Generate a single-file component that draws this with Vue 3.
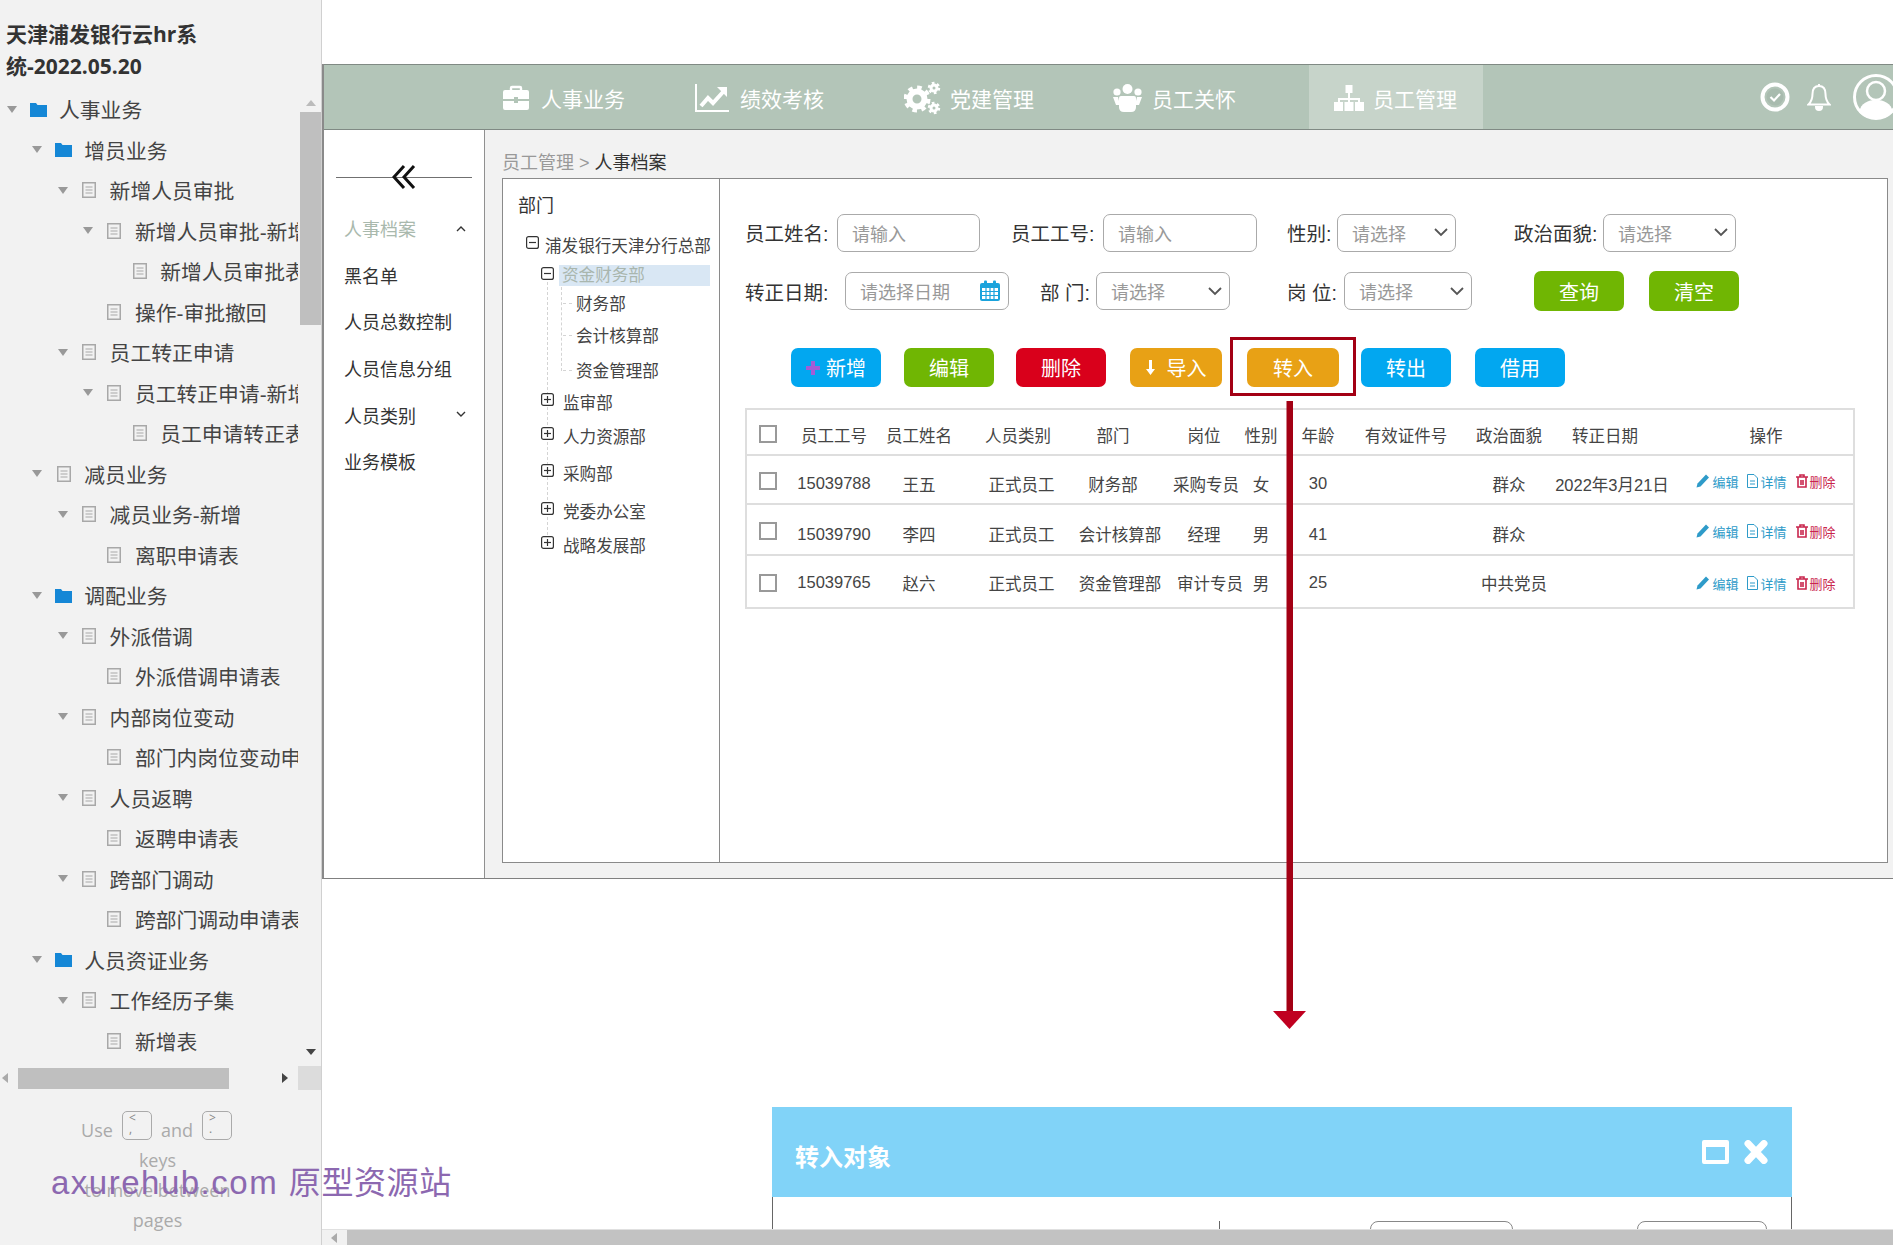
<script setup>
const treeRows = [
  { t: "人事业务", lv: 0, kind: "folder", open: true },
  { t: "增员业务", lv: 1, kind: "folder", open: true },
  { t: "新增人员审批", lv: 2, kind: "doc", open: true },
  { t: "新增人员审批-新增", lv: 3, kind: "doc", open: true },
  { t: "新增人员审批表", lv: 4, kind: "doc" },
  { t: "操作-审批撤回", lv: 3, kind: "doc" },
  { t: "员工转正申请", lv: 2, kind: "doc", open: true },
  { t: "员工转正申请-新增", lv: 3, kind: "doc", open: true },
  { t: "员工申请转正表", lv: 4, kind: "doc" },
  { t: "减员业务", lv: 1, kind: "doc", open: true },
  { t: "减员业务-新增", lv: 2, kind: "doc", open: true },
  { t: "离职申请表", lv: 3, kind: "doc" },
  { t: "调配业务", lv: 1, kind: "folder", open: true },
  { t: "外派借调", lv: 2, kind: "doc", open: true },
  { t: "外派借调申请表", lv: 3, kind: "doc" },
  { t: "内部岗位变动", lv: 2, kind: "doc", open: true },
  { t: "部门内岗位变动申请表", lv: 3, kind: "doc" },
  { t: "人员返聘", lv: 2, kind: "doc", open: true },
  { t: "返聘申请表", lv: 3, kind: "doc" },
  { t: "跨部门调动", lv: 2, kind: "doc", open: true },
  { t: "跨部门调动申请表", lv: 3, kind: "doc" },
  { t: "人员资证业务", lv: 1, kind: "folder", open: true },
  { t: "工作经历子集", lv: 2, kind: "doc", open: true },
  { t: "新增表", lv: 3, kind: "doc" },
];

const menu = [
  { t: "人事档案", on: true, arrow: "up" },
  { t: "黑名单" },
  { t: "人员总数控制" },
  { t: "人员信息分组" },
  { t: "人员类别", arrow: "down" },
  { t: "业务模板" },
];

// 部门树，行高不均匀，按数据给
const depts = [
  { t: "浦发银行天津分行总部", lv: 0, h: 30, box: "minus" },
  { t: "资金财务部", lv: 1, h: 31, box: "minus", sel: true },
  { t: "财务部", lv: 2, h: 23 },
  { t: "会计核算部", lv: 2, h: 42 },
  { t: "资金管理部", lv: 2, h: 28 },
  { t: "监审部", lv: 1, h: 36, box: "plus" },
  { t: "人力资源部", lv: 1, h: 32, box: "plus" },
  { t: "采购部", lv: 1, h: 42, box: "plus" },
  { t: "党委办公室", lv: 1, h: 34, box: "plus" },
  { t: "战略发展部", lv: 1, h: 34, box: "plus" },
];

const row1 = [
  { label: "员工姓名:", lw: 92, ml: 0, w: 143, ph: "请输入" },
  { label: "员工工号:", lw: 92, ml: 31, w: 154, ph: "请输入" },
  { label: "性别:", lw: 50, ml: 30, w: 119, ph: "请选择", select: true },
  { label: "政治面貌:", lw: 89, ml: 58, w: 133, ph: "请选择", select: true },
];
const row2 = [
  { label: "转正日期:", lw: 100, ml: 0, w: 164, ph: "请选择日期", date: true },
  { label: "部 门:", lw: 56, ml: 31, w: 134, ph: "请选择", select: true },
  { label: "岗 位:", lw: 57, ml: 57, w: 128, ph: "请选择", select: true },
];

const headers = ["员工工号", "员工姓名", "人员类别", "部门", "岗位", "性别", "年龄", "有效证件号", "政治面貌", "转正日期", "操作"];
// pt: 文字下移量, deptPad: 部门列修正
const people = [
  { h: 49, pt: 8, deptPad: 0, posPad: 4, polPad: 0, c: ["15039788", "王五", "正式员工", "财务部", "采购专员", "女", "30", "", "群众", "2022年3月21日"] },
  { h: 51, pt: 9, deptPad: 14, posPad: 0, polPad: 0, c: ["15039790", "李四", "正式员工", "会计核算部", "经理", "男", "41", "", "群众", ""] },
  { h: 53, pt: 2, deptPad: 14, posPad: 12, polPad: 10, c: ["15039765", "赵六", "正式员工", "资金管理部", "审计专员", "男", "25", "", "中共党员", ""] },
];
function cellStyle(p, i) {
  if (i === 3) return { paddingLeft: `${p.deptPad}px` };
  if (i === 4) return { paddingLeft: `${18 + p.posPad}px` };
  if (i === 8) return { paddingLeft: `${p.polPad}px` };
  return null;
}
</script>

<template>
  <div class="page">
    <aside class="side">
      <div class="side-title">天津浦发银行云hr系<br />统-2022.05.20</div>
      <div class="tree-wrap">
        <div class="tree">
          <div
            v-for="(r, i) in treeRows"
            :key="i"
            class="tree-row"
            :style="{ paddingLeft: `${6 + r.lv * 25.3}px` }"
          >
            <span class="tri-slot"><i v-if="r.open" class="tri"></i></span>
            <span class="ico-slot">
              <svg v-if="r.kind === 'folder'" width="17" height="15" viewBox="0 0 17 15">
                <path d="M0 1h6l1.5 2H17v12H0z" fill="#1587d6" />
              </svg>
              <svg v-else width="14" height="16" viewBox="0 0 14 16" fill="none" stroke="#a8a8a8">
                <rect x="0.75" y="0.75" width="12.5" height="14.5" stroke-width="1.5" />
                <path d="M3.5 5h7M3.5 8h7M3.5 11h7" stroke-width="1.2" />
              </svg>
            </span>
            <span class="tree-text">{{ r.t }}</span>
          </div>
        </div>
        <div class="vbar">
          <i class="arrow-up"></i>
          <div class="vthumb"></div>
          <i class="arrow-down"></i>
        </div>
      </div>
      <div class="hbar">
        <i class="arrow-left"></i>
        <div class="hthumb"></div>
        <i class="arrow-right"></i>
        <div class="hcorner"></div>
      </div>
      <div class="help">
        <div class="help-line keys-line">
          Use <span class="key">&lt;<br />,</span> and <span class="key">&gt;<br />.</span>
        </div>
        <div class="help-line">keys</div>
        <div class="help-line">to move between</div>
        <div class="help-line">pages</div>
      </div>
    </aside>

    <main class="main">
      <section class="frame">
        <header class="topbar">
          <nav class="nav">
            <a class="nav-item">
              <svg width="28" height="26" viewBox="0 0 28 26" fill="#fff">
                <path d="M9 6V3a1 1 0 0 1 1-1h8a1 1 0 0 1 1 1v3" fill="none" stroke="#fff" stroke-width="2.4" />
                <path d="M3 5h22a2 2 0 0 1 2 2v7H16v-2h-4v2H1V7a2 2 0 0 1 2-2zM1 16h11v2h4v-2h11v7a2 2 0 0 1-2 2H3a2 2 0 0 1-2-2z" />
              </svg>
              <span>人事业务</span>
            </a>
            <a class="nav-item">
              <svg width="34" height="28" viewBox="0 0 34 28" fill="none" stroke="#fff">
                <path d="M1 0v27h33" stroke-width="2" />
                <path d="M6 22l7-8 5 5 10-11" stroke-width="4" />
                <path d="M22 3h10v10z" fill="#fff" stroke="none" />
              </svg>
              <span>绩效考核</span>
            </a>
            <a class="nav-item">
              <svg width="37" height="34" viewBox="0 0 37 34" fill="none" stroke="#fff">
                <circle cx="13" cy="18" r="7.5" stroke-width="6" />
                <circle cx="13" cy="18" r="11.5" stroke-width="4" stroke-dasharray="4.5 4.5" />
                <circle cx="30" cy="7" r="3" stroke-width="3" />
                <circle cx="30" cy="7" r="5" stroke-width="2.5" stroke-dasharray="2.6 2.6" />
                <circle cx="30" cy="27" r="3" stroke-width="3" />
                <circle cx="30" cy="27" r="5" stroke-width="2.5" stroke-dasharray="2.6 2.6" />
              </svg>
              <span>党建管理</span>
            </a>
            <a class="nav-item">
              <svg width="29" height="28" viewBox="0 0 29 28" fill="#fff">
                <circle cx="14.5" cy="5" r="5" />
                <circle cx="4" cy="8" r="3.6" />
                <circle cx="25" cy="8" r="3.6" />
                <path d="M0 13h5l2 8H3zM29 13h-5l-2 8h4z" />
                <path d="M8 12h13a2 2 0 0 1 2 2v9q0 5-5 5h-7q-5 0-5-5v-9a2 2 0 0 1 2-2z" />
              </svg>
              <span>员工关怀</span>
            </a>
            <a class="nav-item active">
              <svg width="30" height="26" viewBox="0 0 30 26" fill="#fff">
                <path d="M11.500 0h7v8h-7z" />
                <path d="M14 8h2v5h10v4h-2v-2H16v2h-2v-2H6v2H4v-4h10z" />
                <path d="M0 17h9v9H0zM10.500 17h9v9h-9zM21 17h9v9h-9z" />
              </svg>
              <span>员工管理</span>
            </a>
          </nav>
          <div class="top-icons">
            <svg width="30" height="30" viewBox="0 0 30 30" fill="none" stroke="#fff">
              <circle cx="15" cy="15" r="12.500" stroke-width="4" />
              <circle cx="15" cy="15" r="8.500" fill="#a8bbae" stroke="none" />
              <path d="M10.500 15l3.500 3.500 6-6.500" stroke-width="2.200" />
            </svg>
            <svg width="24" height="28" viewBox="0 0 24 28" fill="none" stroke="#fff" stroke-width="2">
              <path d="M12 3c-4.500 0-6.500 3.500-6.500 8 0 5-1.500 8-4 10.500h21c-2.500-2.500-4-5.500-4-10.500 0-4.500-2-8-6.500-8z" />
              <path d="M12 1v2" />
              <path d="M9 24a3 3 0 0 0 6 0z" fill="#fff" />
            </svg>
            <svg class="avatar" width="46" height="46" viewBox="0 0 46 46" fill="#fff">
              <circle cx="23" cy="23" r="21.500" fill="none" stroke="#fff" stroke-width="3" />
              <circle cx="23" cy="17" r="9" fill="none" stroke="#fff" stroke-width="2.500" />
              <path d="M6 38c2-9 9-12 17-12s15 3 17 12c-4 4.500-10 7-17 7S10 42.500 6 38z" />
            </svg>
          </div>
        </header>

        <div class="frame-body">
          <div class="subnav">
            <div class="collapse">
              <svg width="24" height="26" viewBox="0 0 24 26" fill="none" stroke="#111" stroke-width="3">
                <path d="M12 2L2 13l10 11M22 2L12 13l10 11" />
              </svg>
            </div>
            <div v-for="m in menu" :key="m.t" class="menu-row" :class="{ on: m.on }">
              <span>{{ m.t }}</span>
              <svg v-if="m.arrow" width="10" height="7" viewBox="0 0 10 7" fill="none" stroke="#333" stroke-width="1.400">
                <path :d="m.arrow === 'up' ? 'M1 6l4-4 4 4' : 'M1 1l4 4 4-4'" />
              </svg>
            </div>
          </div>

          <div class="content">
            <div class="crumbs"><span class="crumb-muted">员工管理 &gt; </span>人事档案</div>
            <div class="panel">
              <div class="dept">
                <div class="dept-title">部门</div>
                <div class="dept-tree">
                  <i class="dash dash-a"></i>
                  <i class="dash dash-b"></i>
                  <div
                    v-for="d in depts"
                    :key="d.t"
                    class="dept-row"
                    :class="`lv${d.lv}`"
                    :style="{ height: `${d.h}px` }"
                  >
                    <svg v-if="d.box" class="dept-box" width="13" height="13" viewBox="0 0 13 13" fill="none" stroke="#333" stroke-width="1.200">
                      <rect x="0.600" y="0.600" width="11.800" height="11.800" rx="2" />
                      <path d="M3 6.500h7" />
                      <path v-if="d.box === 'plus'" d="M6.500 3v7" />
                    </svg>
                    <span :class="{ sel: d.sel }">{{ d.t }}</span>
                  </div>
                </div>
              </div>

              <div class="work">
                <div class="form-row">
                  <div v-for="f in row1" :key="f.label" class="field" :style="{ marginLeft: `${f.ml}px` }">
                    <label :style="{ width: `${f.lw}px` }">{{ f.label }}</label>
                    <div class="control" :style="{ width: `${f.w}px` }">
                      <span>{{ f.ph }}</span>
                      <svg v-if="f.select" width="14" height="9" viewBox="0 0 14 9" fill="none" stroke="#555" stroke-width="1.800">
                        <path d="M1 1l6 6 6-6" />
                      </svg>
                    </div>
                  </div>
                </div>
                <div class="form-row second">
                  <div v-for="f in row2" :key="f.label" class="field" :style="{ marginLeft: `${f.ml}px` }">
                    <label :style="{ width: `${f.lw}px` }">{{ f.label }}</label>
                    <div class="control" :style="{ width: `${f.w}px` }">
                      <span>{{ f.ph }}</span>
                      <svg v-if="f.select" width="14" height="9" viewBox="0 0 14 9" fill="none" stroke="#555" stroke-width="1.800">
                        <path d="M1 1l6 6 6-6" />
                      </svg>
                      <svg v-if="f.date" width="22" height="22" viewBox="0 0 22 22">
                        <rect x="1" y="3" width="20" height="18" rx="2" fill="#1aa3dc" />
                        <rect x="5" y="0.500" width="3" height="5" rx="1" fill="#1aa3dc" />
                        <rect x="14" y="0.500" width="3" height="5" rx="1" fill="#1aa3dc" />
                        <path d="M3 8h16v11H3z" fill="#fff" />
                        <path d="M3 11.500h16M3 15.500h16M7 8v11M11 8v11M15 8v11" stroke="#1aa3dc" stroke-width="1.200" />
                      </svg>
                    </div>
                  </div>
                  <button class="btn green search">查询</button>
                  <button class="btn green clear">清空</button>
                </div>

                <div class="actions">
                  <button class="btn blue">
                    <svg width="14" height="14" viewBox="0 0 14 14"><path d="M5 0h4v5h5v4H9v5H5V9H0V5h5z" fill="#a45cd6" /></svg>
                    新增
                  </button>
                  <button class="btn green">编辑</button>
                  <button class="btn red">删除</button>
                  <button class="btn orange wide import">
                    <svg width="9" height="15" viewBox="0 0 9 15"><path d="M3 0h3v9h3l-4.500 6L0 9h3z" fill="#fff" /></svg>
                    导入
                  </button>
                  <button class="btn orange wide marked">转入</button>
                  <button class="btn blue">转出</button>
                  <button class="btn blue">借用</button>
                </div>

                <div class="table">
                  <div class="tr head">
                    <div class="td"><i class="check"></i></div>
                    <div v-for="h in headers" :key="h" class="td">{{ h }}</div>
                  </div>
                  <div v-for="p in people" :key="p.c[0]" class="tr body" :style="{ height: `${p.h}px`, '--pt': `${p.pt}px` }">
                    <div class="td"><i class="check"></i></div>
                    <div v-for="(c, i) in p.c" :key="i" class="td" :style="cellStyle(p, i)">{{ c }}</div>
                    <div class="td ops">
                      <a class="op blue-op">
                        <svg width="14" height="14" viewBox="0 0 13 14"><path d="M9.500 0.500l3 3L4 12.500 0 13.500l1-4z" fill="#2e9bc9" /></svg>编辑
                      </a>
                      <a class="op blue-op">
                        <svg width="11" height="14" viewBox="0 0 11 14" fill="none" stroke="#2e9bc9"><path d="M0.500 0.500h6.500l3.500 3.500v9.500h-10zM3 7h5M3 10h5" /></svg>详情
                      </a>
                      <a class="op red-op">
                        <svg width="12" height="14" viewBox="0 0 12 14" fill="none" stroke="#c9264d" stroke-width="1.600"><path d="M0 3h12M4 3V1h4v2M2 3v10h8V3M5 6v5M7 6v5" /></svg>删除
                      </a>
                    </div>
                  </div>
                </div>
              </div>
            </div>
          </div>
        </div>
      </section>

      <section class="below">
        <div class="dialog">
          <div class="dialog-head">
            <span>转入对象</span>
            <div class="dialog-icons">
              <svg width="27" height="24" viewBox="0 0 27 24"><path d="M2 0h23a2 2 0 0 1 2 2v20a2 2 0 0 1-2 2H2a2 2 0 0 1-2-2V2a2 2 0 0 1 2-2zm2 7v13h19V7z" fill="#fff" /></svg>
              <svg width="24" height="24" viewBox="0 0 24 24"><path d="M4 3.500L20 20.500M20 3.500L4 20.500" stroke="#fff" stroke-width="7" stroke-linecap="round" fill="none" /></svg>
            </div>
          </div>
          <div class="dialog-body">
            <i class="tick"></i>
            <i class="stub stub-a"></i>
            <i class="stub stub-b"></i>
          </div>
        </div>
      </section>

      <div class="bottombar">
        <i class="arrow-left"></i>
        <div class="bottom-thumb"></div>
      </div>
    </main>

    <!-- 标注箭头，压在表格上面 -->
    <svg class="flow-arrow" width="40" height="630" viewBox="0 0 40 630">
      <rect x="16.500" y="0" width="6.500" height="612" fill="#a30014" />
      <path d="M3 610h33l-16.500 18z" fill="#c00020" />
    </svg>
    <div class="watermark">axurehub.com <span class="wm-cjk">原型资源站</span></div>
  </div>
</template>

<style scoped>
.page {
  position: relative;
  display: flex;
  width: 1893px;
  height: 1245px;
  overflow: hidden;
  background: #fff;
  font-family: "Liberation Sans", "Noto Sans CJK SC", sans-serif;
  color: #444;
}

/* 左侧页面树 */
.side {
  width: 321px;
  flex: none;
  display: flex;
  flex-direction: column;
  background: #f2f2f2;
  border-right: 1px solid #d0d0d0;
}
.side-title {
  height: 71px;
  padding: 18px 0 0 6px;
  font-family: "Open Sans", "Noto Sans CJK SC", sans-serif;
  font-size: 21px;
  font-weight: 700;
  line-height: 32px;
  color: #333;
}
.tree-wrap {
  display: flex;
  height: 977px;
}
.tree {
  width: 298px;
  margin-right: 2px;
  overflow: hidden;
}
.tree-row {
  display: flex;
  align-items: center;
  height: 40.500px;
  font-size: 20.800px;
  white-space: nowrap;
}
.tri-slot {
  width: 12px;
  flex: none;
  display: flex;
  justify-content: center;
}
.tri {
  border-left: 5.500px solid transparent;
  border-right: 5.500px solid transparent;
  border-top: 7px solid #999;
}
.ico-slot {
  width: 17px;
  margin-left: 12px;
  flex: none;
  display: flex;
  justify-content: center;
}
.tree-text {
  margin-left: 12px;
}
.vbar {
  width: 21px;
  display: flex;
  flex-direction: column;
  align-items: center;
  padding-top: 11px;
}
.arrow-up {
  border-left: 5px solid transparent;
  border-right: 5px solid transparent;
  border-bottom: 6px solid #bbb;
}
.arrow-down {
  margin-top: 724px;
  border-left: 5px solid transparent;
  border-right: 5px solid transparent;
  border-top: 6px solid #444;
}
.vthumb {
  width: 100%;
  height: 213px;
  margin-top: 6px;
  background: #bfbfbf;
}
.hbar {
  display: flex;
  align-items: center;
  height: 24px;
}
.arrow-left {
  flex: none;
  margin-left: 2px;
  border-top: 5.500px solid transparent;
  border-bottom: 5.500px solid transparent;
  border-right: 6px solid #aaa;
}
.arrow-right {
  flex: none;
  margin-left: 53px;
  border-top: 5.500px solid transparent;
  border-bottom: 5.500px solid transparent;
  border-left: 6px solid #444;
}
.hthumb {
  width: 211px;
  height: 21px;
  margin-left: 10px;
  background: #bfbfbf;
}
.hcorner {
  flex: 1;
  height: 24px;
  margin-left: 10px;
  background: #dcdcdc;
}
.help {
  padding: 25px 6px 0 0;
  text-align: center;
  font-family: "Open Sans", "Liberation Sans", sans-serif;
  font-size: 18px;
  color: #aaa;
}
.help-line {
  height: 30px;
  line-height: 30px;
}
.keys-line {
  display: flex;
  justify-content: center;
  align-items: center;
  gap: 9px;
  padding-right: 2px;
}
.key {
  width: 30px;
  height: 29px;
  box-sizing: border-box;
  margin-top: -10px;
  padding-left: 6px;
  border: 1.500px solid #aaa;
  border-radius: 5px;
  font-size: 12px;
  line-height: 11px;
  text-align: left;
  color: #888;
}

/* 右侧 */
.main {
  flex: 1;
  min-width: 0;
  display: flex;
  flex-direction: column;
  padding-top: 64px;
}
.frame {
  height: 815px;
  flex: none;
  box-sizing: border-box;
  display: flex;
  flex-direction: column;
  border-left: 2px solid #8a8a8a;
  border-bottom: 1px solid #808080;
}
.topbar {
  height: 66px;
  flex: none;
  box-sizing: border-box;
  display: flex;
  align-items: center;
  justify-content: space-between;
  background: #b3c5b8;
  border-top: 1px solid #808a84;
  border-bottom: 1px solid #808a84;
}
.nav {
  display: flex;
  align-self: stretch;
}
.nav-item {
  display: flex;
  align-items: center;
  gap: 11px;
  padding-top: 2px;
  font-size: 21px;
  color: #fff;
}
.nav-item:nth-child(1) { margin-left: 178px; }
.nav-item:nth-child(2) { margin-left: 70px; }
.nav-item:nth-child(3) { margin-left: 80px; gap: 9px; }
.nav-item:nth-child(4) { margin-left: 79px; gap: 10px; }
.nav-item.active {
  margin-left: 73px;
  padding: 2px 26px 0 25px;
  gap: 9px;
  background: #c7d4ca;
}
.top-icons {
  display: flex;
  align-items: center;
  gap: 17px;
  margin-right: -6px;
}
.avatar {
  margin-left: 5px;
}

.frame-body {
  flex: 1;
  min-height: 0;
  display: flex;
}
.subnav {
  width: 160px;
  flex: none;
  border-right: 1px solid #909090;
  background: #fff;
}
.collapse {
  height: 30px;
  margin: 32px 12px 13px 12px;
  display: flex;
  align-items: center;
  justify-content: center;
  background: linear-gradient(#707070, #707070) center / 100% 1px no-repeat;
}
.menu-row {
  height: 46.600px;
  padding: 0 18px 0 20px;
  display: flex;
  align-items: center;
  justify-content: space-between;
  font-size: 18px;
  color: #333;
}
.menu-row.on {
  color: #a9b9ad;
}
.content {
  flex: 1;
  min-width: 0;
  display: flex;
  flex-direction: column;
  padding: 0 5px 15px 17px;
  background: #f2f2f2;
}
.crumbs {
  height: 48px;
  flex: none;
  box-sizing: border-box;
  padding-top: 22px;
  font-size: 18px;
  line-height: 22px;
  color: #333;
}
.crumb-muted {
  color: #999;
}
.panel {
  flex: 1;
  min-height: 0;
  display: flex;
  background: #fff;
  border: 1px solid #8a8a8a;
}

/* 部门树 */
.dept {
  width: 217px;
  flex: none;
  box-sizing: border-box;
  border-right: 1px solid #8a8a8a;
  font-size: 16.600px;
  color: #444;
}
.dept-title {
  height: 51px;
  padding: 15px 0 0 15px;
  box-sizing: border-box;
  font-size: 18px;
  line-height: 24px;
  color: #333;
}
.dept-tree {
  position: relative;
}
.dash {
  position: absolute;
  width: 0;
  border-left: 1px dashed #d4d4d4;
}
.dash-a {
  left: 44px;
  top: 52px;
  height: 258px;
}
.dash-b {
  left: 58px;
  top: 57px;
  height: 84px;
}
.dept-row {
  position: relative;
  display: flex;
  align-items: center;
  white-space: nowrap;
}
.dept-box {
  flex: none;
  margin-bottom: 5px;
  background: #fff;
}
.dept-row.lv0 { padding-left: 23px; gap: 6px; }
.dept-row.lv1 { padding-left: 38px; gap: 9px; }
.dept-row.lv2 { padding-left: 73px; }
.dept-row.lv2::before {
  content: "";
  position: absolute;
  left: 60px;
  top: 50%;
  width: 9px;
  border-top: 1px dashed #d4d4d4;
}
.sel {
  width: 151px;
  margin-left: -4px;
  padding-left: 3px;
  box-sizing: border-box;
  background: #d9e7f4;
  color: #a9b6ae;
  line-height: 21px;
}

/* 表单 */
.work {
  flex: 1;
  min-width: 0;
  padding: 34px 0 0 25px;
}
.form-row {
  display: flex;
  align-items: center;
  height: 39px;
}
.form-row.second {
  height: 40px;
  margin-top: 19px;
}
.field {
  display: flex;
  align-items: center;
}
.field label {
  flex: none;
  font-size: 19.500px;
  color: #333;
  white-space: pre;
}
.control {
  height: 38px;
  box-sizing: border-box;
  display: flex;
  align-items: center;
  justify-content: space-between;
  padding: 0 7px 0 14px;
  background: #fff;
  border: 1px solid #aaa;
  border-radius: 7px;
  font-size: 18px;
  color: #999;
}
.btn {
  flex: none;
  width: 90px;
  height: 39px;
  padding: 0;
  display: flex;
  align-items: center;
  justify-content: center;
  gap: 6px;
  border: 0;
  border-radius: 7px;
  font-family: inherit;
  font-size: 20px;
  color: #fff;
}
.btn.green { background: #70b603; }
.btn.blue { background: #02a7f0; }
.btn.red { background: #d9001b; }
.btn.orange { background: #e8a115; }
.btn.wide { width: 92px; }
.btn.import { gap: 12px; }
.form-row .search { margin-left: 62px; height: 40px; }
.form-row .clear { margin-left: 25px; height: 40px; }
.actions {
  display: flex;
  margin: 37px 0 0 46px;
  gap: 23px;
}
.actions .btn:nth-child(3) { margin-left: -1px; }
.actions .btn:nth-child(4) { margin-left: 1px; }
.actions .btn:nth-child(5) { margin-left: 2px; }
.actions .btn:nth-child(6) { margin-left: -1px; }
.actions .btn:nth-child(7) { margin-left: 1px; }
.marked {
  position: relative;
}
.marked::after {
  content: "";
  position: absolute;
  inset: -11px -17px -9px -17px;
  border: 3px solid #a30014;
}

/* 表格 */
.table {
  width: 1110px;
  margin: 21px 0 0 0;
  box-sizing: border-box;
  border-top: 2px solid #dedede;
  border-left: 2px solid #dedede;
  border-right: 2px solid #dedede;
  font-size: 16.500px;
}
.tr {
  display: grid;
  grid-template-columns: 42px 90px 80px 118px 72px 92px 40px 74px 102px 104px 88px 204px;
  box-sizing: border-box;
  border-bottom: 2px solid #dedede;
}
.tr.head {
  height: 46px;
  --pt: 6px;
}
.td {
  display: flex;
  align-items: center;
  justify-content: center;
  padding-top: var(--pt);
  white-space: nowrap;
}
.td:first-child { padding-top: 2px; }
.td:nth-child(6) { padding-left: 18px; }
.td:last-child { padding-left: 30px; }
.body .td:nth-child(4) { padding-left: 7px; }
.body .td:nth-child(11) { padding-left: 14px; }
.head .td:first-child { padding-top: 4px; }
.check {
  width: 18px;
  height: 18px;
  box-sizing: border-box;
  border: 2px solid #999;
}
.td.ops {
  gap: 9px;
  padding-top: 3px;
  font-size: 13px;
}
.op {
  display: flex;
  align-items: center;
  gap: 2px;
}
.blue-op { color: #2e9bc9; }
.red-op { color: #c9264d; }

/* 下方弹窗 */
.below {
  flex: 1;
  min-height: 0;
  overflow: hidden;
  padding: 228px 0 0 450px;
}
.dialog {
  width: 1020px;
  box-sizing: border-box;
}
.dialog-head {
  height: 90px;
  box-sizing: border-box;
  display: flex;
  align-items: center;
  justify-content: space-between;
  padding: 7px 24px 0 23px;
  background: #81d3f8;
  font-size: 24px;
  font-weight: 700;
  color: #fff;
}
.dialog-icons {
  display: flex;
  align-items: center;
  gap: 15px;
  margin-bottom: 7px;
}
.dialog-body {
  display: flex;
  height: 60px;
  padding-top: 24px;
  box-sizing: border-box;
  border-left: 1px solid #666;
  border-right: 1px solid #666;
}
.tick {
  width: 1px;
  height: 20px;
  margin-left: 446px;
  background: #666;
}
.stub {
  height: 30px;
  box-sizing: border-box;
  border: 1px solid #888;
  border-radius: 8px;
}
.stub-a { width: 143px; margin-left: 150px; }
.stub-b { width: 130px; margin-left: 124px; }
.bottombar {
  height: 15px;
  flex: none;
  display: flex;
  align-items: center;
  background: #f1f1f1;
  border-top: 1px solid #e0e0e0;
}
.bottombar .arrow-left {
  margin-left: 9px;
}
.bottom-thumb {
  flex: 1;
  height: 100%;
  margin-left: 10px;
  background: #c2c2c2;
}

.flow-arrow {
  position: absolute;
  left: 1270px;
  top: 401px;
}
.watermark {
  position: absolute;
  left: 51px;
  top: 1161px;
  font-size: 33px;
  line-height: 44px;
  letter-spacing: 1.500px;
  color: #8c68b0;
  white-space: nowrap;
}
.wm-cjk {
  font-size: 32px;
  letter-spacing: 0.600px;
}
</style>

<style>
html,
body {
  margin: 0;
  overflow: hidden;
}
</style>
